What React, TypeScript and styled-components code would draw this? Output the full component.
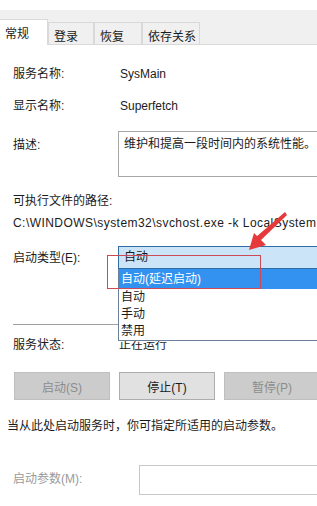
import React from "react";
import styled, { createGlobalStyle } from "styled-components";

const GlobalStyle = createGlobalStyle`
  html, body {
    margin: 0;
    padding: 0;
    background: #ffffff;
  }
  body {
    font-family: "Liberation Sans", "Noto Sans CJK SC", sans-serif;
    font-size: 12px;
    color: #1b1b1b;
  }
`;

const Window = styled.div`
  position: relative;
  width: 317px;
  height: 506px;
  overflow: hidden;
  background: #ffffff;
`;

const TitleStrip = styled.div`
  height: 10px;
  overflow: hidden;
  background: #ffffff;
  span {
    display: block;
    margin-top: -14px;
    padding-left: 2px;
    font-size: 12px;
    line-height: 14px;
    color: #333;
    white-space: nowrap;
  }
`;

const TabBar = styled.div`
  display: flex;
  align-items: flex-end;
  height: 34px;
  background: #f0f0f0;
  border-bottom: 1px solid #d9d9d9;
`;

const Tab = styled.div<{ $active?: boolean; $w: number }>`
  box-sizing: border-box;
  width: ${(p) => p.$w}px;
  height: ${(p) => (p.$active ? 26 : 22)}px;
  margin-bottom: ${(p) => (p.$active ? -1 : 0)}px;
  padding-left: 5px;
  display: flex;
  align-items: center;
  padding-top: ${(p) => (p.$active ? 0 : 3)}px;
  background: ${(p) => (p.$active ? "#ffffff" : "#f0f0f0")};
  border: 1px solid #d9d9d9;
  border-left: ${(p) => (p.$active ? "none" : "1px solid #d9d9d9")};
  border-bottom: none;
  color: #1b1b1b;
`;

const Content = styled.div`
  display: flex;
  flex-direction: column;
  padding: 19px 12px 0 13px;
`;

const Row = styled.div<{ $mt?: number }>`
  display: flex;
  align-items: flex-start;
  margin-top: ${(p) => p.$mt ?? 0}px;
`;

const Label = styled.div<{ $lh?: number; $muted?: boolean; $w?: number }>`
  width: ${(p) => p.$w ?? 105}px;
  flex-shrink: 0;
  line-height: ${(p) => p.$lh ?? 20}px;
  color: ${(p) => (p.$muted ? "#9a9a9a" : "#1b1b1b")};
  white-space: nowrap;
`;

const Value = styled.div`
  line-height: 20px;
  padding-left: 2px;
  white-space: nowrap;
`;

const Line = styled.div<{ $mt?: number; $ml?: number; $ls?: number }>`
  line-height: 20px;
  margin-top: ${(p) => p.$mt ?? 0}px;
  margin-left: ${(p) => p.$ml ?? 0}px;
  letter-spacing: ${(p) => p.$ls ?? 0}px;
  white-space: nowrap;
`;

const TextBox = styled.div<{ $h: number }>`
  box-sizing: border-box;
  flex: 1;
  height: ${(p) => p.$h}px;
  margin-right: -20px;
  padding: 4px 5px;
  line-height: 16px;
  border: 1px solid #a8a8a8;
  background: #ffffff;
`;

const Combo = styled.div`
  position: relative;
  z-index: 2;
  flex: 1;
  margin-right: -20px;
`;

const ComboField = styled.div`
  box-sizing: border-box;
  height: 23px;
  padding-left: 5px;
  line-height: 21px;
  border: 1px solid #2f6ea5;
  background: #cce4f7;
`;

const DropList = styled.div`
  position: absolute;
  top: 23px;
  left: 0;
  right: 0;
  box-sizing: border-box;
  background: #ffffff;
  border: 1px solid #6b7f99;
  border-top: none;
`;

const Option = styled.div<{ $hl?: boolean }>`
  height: ${(p) => (p.$hl ? 20 : 17)}px;
  line-height: ${(p) => (p.$hl ? 20 : 17)}px;
  padding-left: 2px;
  background: ${(p) => (p.$hl ? "#3392f0" : "#ffffff")};
  color: ${(p) => (p.$hl ? "#ffffff" : "#1b1b1b")};
`;

const Separator = styled.div`
  height: 1px;
  margin-top: 53px;
  background: #a0a0a0;
`;

const ButtonRow = styled.div`
  display: flex;
  gap: 9px;
  margin-top: 17px;
  margin-left: 1px;
`;

const Button = styled.div<{ $disabled?: boolean }>`
  box-sizing: border-box;
  flex-shrink: 0;
  width: 96px;
  height: 28px;
  display: flex;
  align-items: center;
  justify-content: center;
  background: ${(p) => (p.$disabled ? "#cccccc" : "#e1e1e1")};
  border: 1px solid ${(p) => (p.$disabled ? "#bfbfbf" : "#adadad")};
  color: ${(p) => (p.$disabled ? "#8c8c8c" : "#1b1b1b")};
`;

const ParamBox = styled.div`
  box-sizing: border-box;
  flex: 1;
  height: 30px;
  margin-right: -20px;
  border: 1px solid #c8c8c8;
  background: #ffffff;
`;

const Highlight = styled.div`
  position: absolute;
  z-index: 3;
  left: 107px;
  top: 255px;
  width: 154px;
  height: 34px;
  box-sizing: border-box;
  border: 1px solid #cc4a55;
`;

const Arrow = styled.svg`
  position: absolute;
  z-index: 4;
  left: 0;
  top: 0;
  pointer-events: none;
`;

export default function App() {
  return (
    <Window>
      <GlobalStyle />
      <TitleStrip>
        <span>Superfetch 的属性(本地计算机)   ypg   (p)</span>
      </TitleStrip>
      <TabBar>
        <Tab $active $w={48}>常规</Tab>
        <Tab $w={46}>登录</Tab>
        <Tab $w={48}>恢复</Tab>
        <Tab $w={58}>依存关系</Tab>
      </TabBar>
      <Content>
        <Row>
          <Label>服务名称:</Label>
          <Value>SysMain</Value>
        </Row>
        <Row $mt={12}>
          <Label>显示名称:</Label>
          <Value>Superfetch</Value>
        </Row>
        <Row $mt={15}>
          <Label $lh={28}>描述:</Label>
          <TextBox $h={46}>维护和提高一段时间内的系统性能。</TextBox>
        </Row>
        <Line $mt={14}>可执行文件的路径:</Line>
        <Line $mt={2} $ls={0.45}>C:\WINDOWS\system32\svchost.exe -k LocalSystemNetworkRestricted</Line>
        <Row $mt={13}>
          <Label $lh={25}>启动类型(E):</Label>
          <Combo>
            <ComboField>自动</ComboField>
            <DropList>
              <Option $hl>自动(延迟启动)</Option>
              <Option>自动</Option>
              <Option>手动</Option>
              <Option>禁用</Option>
            </DropList>
          </Combo>
        </Row>
        <Separator />
        <Row $mt={10}>
          <Label $w={104}>服务状态:</Label>
          <Value>正在运行</Value>
        </Row>
        <ButtonRow>
          <Button $disabled>启动(S)</Button>
          <Button>停止(T)</Button>
          <Button $disabled>暂停(P)</Button>
        </ButtonRow>
        <Line $mt={16} $ml={-6}>当从此处启动服务时，你可指定所适用的启动参数。</Line>
        <Row $mt={29}>
          <Label $w={126} $lh={28} $muted>启动参数(M):</Label>
          <ParamBox />
        </Row>
      </Content>
      <Highlight />
      <Arrow width="317" height="506" viewBox="0 0 317 506">
        <polygon points="285,212 287,215 260,241 256,237" fill="#e5393b" />
        <polygon points="249,250 254,233 266,245" fill="#e5393b" />
      </Arrow>
    </Window>
  );
}
